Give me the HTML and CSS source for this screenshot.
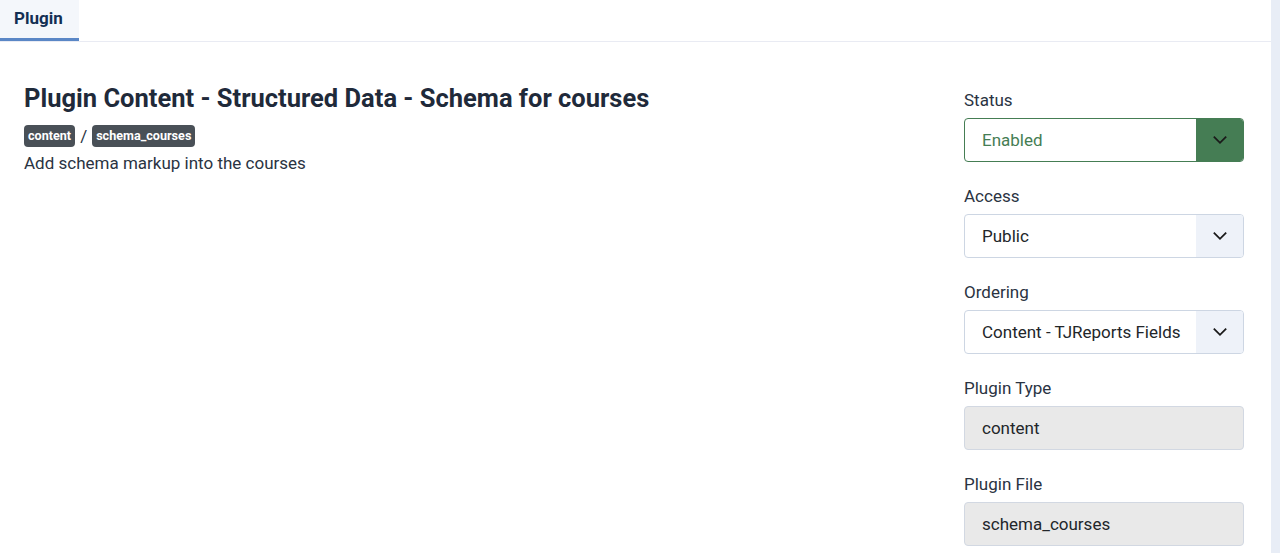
FILE: index.html
```html
<!DOCTYPE html>
<html>
<head>
    <title>Plugin Content - Structured Data - Schema for courses</title>
    <link rel="stylesheet" href="styles.css">
</head>
<body>
    <div class="page">
        <div class="main">
            <div class="tabs">
                <div class="tab active">Plugin</div>
            </div>

            <div class="panel">
                <div class="info">
                    <h1>Plugin Content - Structured Data - Schema for courses</h1>
                    <div class="badges">
                        <span class="badge">content</span>
                        <span class="sep">/</span>
                        <span class="badge">schema_courses</span>
                    </div>
                    <p class="desc">Add schema markup into the courses</p>
                </div>

                <div class="options">
                    <div class="field">
                        <label>Status</label>
                        <div class="select status">
                            <span class="value">Enabled</span>
                            <span class="caret"><svg width="18" height="18" viewBox="0 0 16 16"><path d="M2.5 5l5.5 5.5 5.5-5.5" fill="none" stroke="#1a1a1a" stroke-width="1.6"/></svg></span>
                        </div>
                    </div>
                    <div class="field">
                        <label>Access</label>
                        <div class="select">
                            <span class="value">Public</span>
                            <span class="caret"><svg width="18" height="18" viewBox="0 0 16 16"><path d="M2.5 5l5.5 5.5 5.5-5.5" fill="none" stroke="#1a1a1a" stroke-width="1.6"/></svg></span>
                        </div>
                    </div>
                    <div class="field">
                        <label>Ordering</label>
                        <div class="select">
                            <span class="value">Content - TJReports Fields</span>
                            <span class="caret"><svg width="18" height="18" viewBox="0 0 16 16"><path d="M2.5 5l5.5 5.5 5.5-5.5" fill="none" stroke="#1a1a1a" stroke-width="1.6"/></svg></span>
                        </div>
                    </div>
                    <div class="field">
                        <label>Plugin Type</label>
                        <div class="readonly">content</div>
                    </div>
                    <div class="field">
                        <label>Plugin File</label>
                        <div class="readonly">schema_courses</div>
                    </div>
                </div>
            </div>
        </div>
        <div class="edge"></div>
    </div>
</body>
</html>
```

FILE: styles.css
```css
body {
    margin: 0;
    font-family: Roboto, "Liberation Sans", sans-serif;
    color: #22262a;
    background: #fff;
}

.page {
    display: flex;
    height: 553px;
    overflow: hidden;
}

.main {
    flex: 1;
}

.edge {
    width: 9px;
    background: #e8edf6;
}

.tabs {
    display: flex;
    border-bottom: 1px solid #e9ebf3;
}

.tab {
    height: 38px;
    padding: 0 16px 0 14px;
    line-height: 37px;
    font-size: 17px;
    font-weight: bold;
    color: #132f53;
    border-bottom: 3px solid #5a87c6;
}

.tab.active {
    background: #f4f7fb;
}

.panel {
    display: flex;
    padding: 39px 27px 0 24px;
}

.info {
    flex: 1;
}

h1 {
    margin: 0;
    font-size: 25.5px;
    line-height: 34px;
    font-weight: bold;
    color: #1f2a3a;
}

.badges {
    display: flex;
    align-items: center;
    margin-top: 10px;
}

.badge {
    background: #495057;
    color: #fff;
    font-size: 12.6px;
    font-weight: bold;
    line-height: 22px;
    padding: 0 4px;
    border-radius: 4px;
}

.sep {
    margin: 0 5px 0 5px;
    font-size: 17px;
    color: #2a3342;
}

.desc {
    margin: 4px 0 0;
    font-size: 17px;
    line-height: 25px;
    color: #2a3342;
}

.options {
    width: 280px;
    padding-top: 7px;
}

.field {
    margin-bottom: 22px;
}

.field label {
    display: block;
    font-size: 17px;
    line-height: 25px;
    color: #2a3342;
    margin-bottom: 5px;
}

.select {
    display: flex;
    height: 42px;
    border: 1px solid #cdd6e3;
    border-radius: 4px;
    overflow: hidden;
}

.select .value {
    flex: 1;
    padding-left: 17px;
    line-height: 42px;
    font-size: 17px;
    color: #22262a;
}

.select .caret {
    width: 47px;
    background: #eef2f9;
    display: flex;
    align-items: center;
    justify-content: center;
}

.select.status {
    border-color: #457d54;
}

.select.status .value {
    color: #457d54;
}

.select.status .caret {
    background: #457d54;
}

.readonly {
    height: 42px;
    line-height: 42px;
    padding-left: 17px;
    font-size: 17px;
    color: #22262a;
    background: #e9e9e9;
    border: 1px solid #d2d8e2;
    border-radius: 4px;
}
```
